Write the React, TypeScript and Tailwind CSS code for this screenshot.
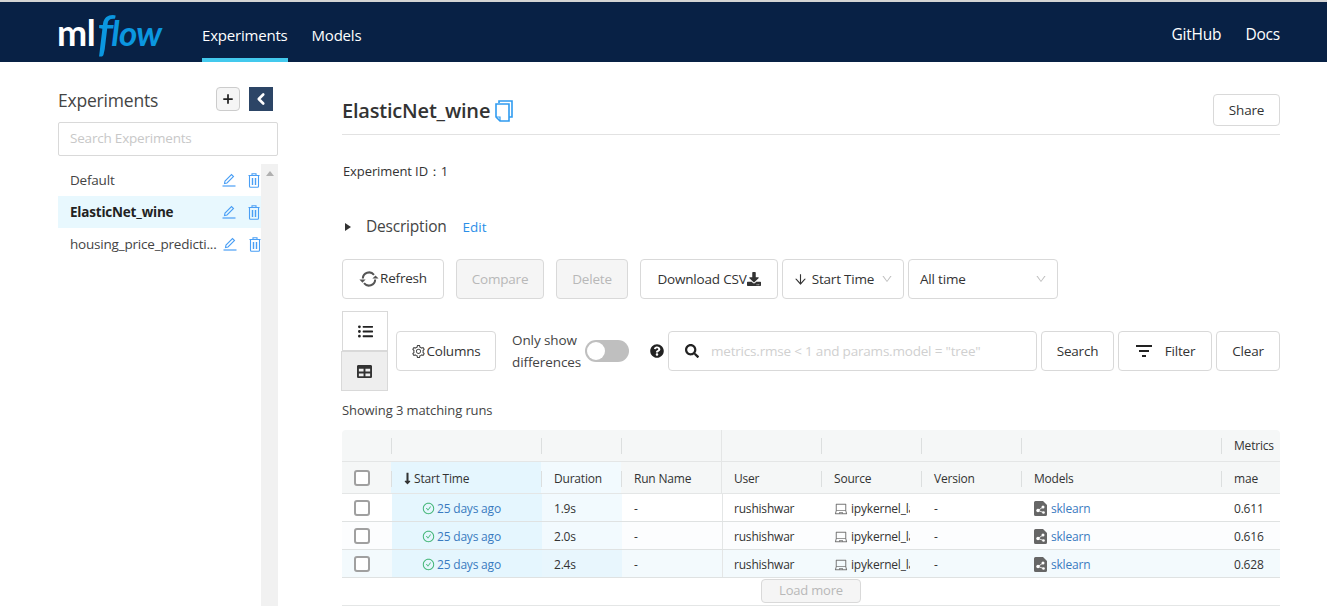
import React from 'react';
import { ChevronLeft, Plus } from 'lucide-react';
import { AiOutlineArrowDown, AiOutlineCheckCircle, AiOutlineDown, AiOutlineLaptop, AiOutlineSetting } from 'react-icons/ai';
import { FaDownload, FaListUl, FaLongArrowAltDown, FaQuestionCircle, FaSearch, FaTable } from 'react-icons/fa';

const font = "font-['Open_Sans','Noto_Sans',sans-serif]";

const experiments = [
  { name: 'Default', active: false, shift: false },
  { name: 'ElasticNet_wine', active: true, shift: false },
  { name: 'housing_price_predicti...', active: false, shift: true }
];

const runs = [
  { duration: '1.9s', mae: '0.611', rowBg: 'bg-white', durBg: 'bg-[#f2fafe]' },
  { duration: '2.0s', mae: '0.616', rowBg: 'bg-[#fcfdfe]', durBg: 'bg-[#f2fafe]' },
  { duration: '2.4s', mae: '0.628', rowBg: 'bg-[#f3fafd]', durBg: 'bg-[#e8f6fd]' }
];

function Btn({ className, children, disabled }: { className: string; children: React.ReactNode; disabled?: boolean }) {
  return (
    <div className={`flex items-center justify-center rounded-[4px] border border-[#d9d9d9] text-[13.5px] tracking-[-0.2px] ${disabled ? 'bg-[#f5f5f5] text-[#b8b8b8]' : 'bg-white text-[#333]'} ${className}`}>
      {children}
    </div>
  );
}

function Box() {
  return <div className="h-[16px] w-[16px] rounded-[3px] border-2 border-[#a0a0a0] bg-white" />;
}

function Sep() {
  return <div className="h-[16px] w-px shrink-0 bg-[#dcdfdf]" />;
}

function EditIcon() {
  return (
    <svg width="14" height="14" viewBox="0 0 14 14" className="shrink-0" fill="none" stroke="#4a9ff5">
      <path d="M2.5 10.5 3 8l6.5-6.5 2 2L5 10z" strokeWidth="1.1" />
      <path d="M0.5 13h13" strokeWidth="1.2" />
    </svg>
  );
}

function TrashIcon() {
  return (
    <svg width="12" height="15" viewBox="0 0 12 15" className="shrink-0" fill="none" stroke="#4a9ff5" strokeWidth="1.1">
      <path d="M0.5 2.5h11M4 2.5V0.7h4v1.8" />
      <path d="M1.5 2.5v10.8a1 1 0 0 0 1 1h7a1 1 0 0 0 1-1V2.5" />
      <path d="M4.5 5v7M7.5 5v7" strokeWidth="1.4" />
    </svg>
  );
}

function CopyIcon() {
  return (
    <svg width="18" height="22" viewBox="0 0 18 22" className="ml-[5px] shrink-0" fill="none" stroke="#2f9bf0" strokeWidth="1.6">
      <path d="M4 3V1h13v16h-3" />
      <path d="M1 4h13v17H5l-4-4z" />
      <path d="M1 17h4v4" strokeWidth="1.2" />
    </svg>
  );
}

function SyncIcon() {
  return (
    <svg width="20" height="18" viewBox="0 0 20 18" className="shrink-0" fill="none" stroke="#555" strokeWidth="2">
      <path d="M3.8 8.5A6.3 6.3 0 0 1 15 4.8" />
      <path d="M16.2 9.5A6.3 6.3 0 0 1 5 13.2" />
      <path d="M0.4 9.6h6.2L3.5 12.8z" fill="#555" stroke="none" />
      <path d="M13.4 8.6h6.2l-3.1-3.2z" fill="#555" stroke="none" />
    </svg>
  );
}

function ModelIcon() {
  return (
    <svg width="13" height="15" viewBox="0 0 13 15" className="mr-[4px] shrink-0">
      <path d="M1.5 0H9l4 4v9.5a1.5 1.5 0 0 1-1.5 1.5h-10A1.5 1.5 0 0 1 0 13.5v-12A1.5 1.5 0 0 1 1.5 0z" fill="#666" />
      <circle cx="4" cy="9.5" r="1.7" fill="#fff" />
      <circle cx="9" cy="6" r="1.5" fill="#fff" />
      <circle cx="9.5" cy="11.5" r="1.3" fill="#fff" />
      <path d="M4 9.5 9 6M4 9.5l5.5 2" stroke="#fff" strokeWidth="0.8" />
    </svg>
  );
}

export default function App() {
  return (
    <div className={`h-[606px] w-[1327px] overflow-hidden bg-white text-[#333] ${font}`}>
      <div className="h-[2px] bg-[#d4d4d4]" />
      <header className="flex h-[60px] items-stretch bg-[#082145] pl-[57px] pr-[47px] text-white">
        <div className="flex w-[145px] items-center leading-none">
          <span className="font-['Lato',sans-serif] text-[36px] font-bold tracking-[-0.5px]">ml</span>
          <span className="ml-[2px] font-['Lato',sans-serif] text-[50px] font-medium italic leading-none text-[#0b97e0]">f</span>
          <span className="-ml-[2px] font-['Lato',sans-serif] text-[35px] font-bold italic tracking-[-0.7px] text-[#0b97e0]">low</span>
        </div>
        <div className="flex h-full flex-col justify-between">
          <div className="flex h-full items-center pt-[10px] text-[15px] tracking-[-0.2px]">Experiments</div>
          <div className="h-[4px] bg-[#43c9ed]" />
        </div>
        <div className="ml-[24px] flex items-center pt-[6px] text-[15px] tracking-[-0.2px]">Models</div>
        <div className="ml-auto flex items-center gap-[24px] pt-[6px] text-[15.5px] tracking-[-0.2px]">
          <span>GitHub</span>
          <span>Docs</span>
        </div>
      </header>

      <div className="flex pl-[58px]">
        <aside className="w-[220px] shrink-0 pt-[25px]">
          <div className="flex h-[24px] items-center">
            <span className="mt-[3px] w-[158px] text-[17.5px] tracking-[-0.2px] text-[#444]">Experiments</span>
            <div className="flex h-[24px] w-[24px] items-center justify-center rounded-[4px] border border-[#ccc] bg-[#f5f5f5]">
              <Plus size={14} strokeWidth={3} className="text-[#222]" />
            </div>
            <div className="ml-[9px] flex h-[24px] w-[24px] items-center justify-center bg-[#2c4566]">
              <ChevronLeft size={18} strokeWidth={3.5} className="text-white" />
            </div>
          </div>
          <div className="mt-[11px] flex h-[34px] items-center rounded-[2px] border border-[#d9d9d9] px-[11px] pb-[2px] text-[13.5px] tracking-[-0.2px] text-[#c8c8c8]">
            Search Experiments
          </div>
          <div className="mt-[8px] flex h-[500px]">
            <div className="w-[203px] shrink-0">
              {experiments.map((exp) => (
                <div key={exp.name} className={`flex h-[32px] items-center pl-[12px] text-[13.5px] tracking-[-0.2px] ${exp.active ? 'bg-[#e8f8fe] font-bold text-[#222]' : 'text-[#444]'}`}>
                  <span className={exp.shift ? 'w-[155px] truncate' : 'w-[152px]'}>{exp.name}</span>
                  <EditIcon />
                  <div className="ml-[12px]"><TrashIcon /></div>
                </div>
              ))}
            </div>
            <div className="flex flex-1 justify-center bg-[#f1f1f1] pt-[7px]">
              <div className="h-0 w-0 border-x-[4px] border-b-[5px] border-x-transparent border-b-[#b0b0b0]" />
            </div>
          </div>
        </aside>

        <main className="ml-[64px] w-[938px] shrink-0">
          <div className="flex h-[73px] items-start justify-between border-b border-[#e2e2e2] pt-[32px]">
            <div className="flex items-center pt-[3px] text-[20px] font-semibold leading-[28px] tracking-[-0.2px] text-[#333]">
              ElasticNet_wine
              <CopyIcon />
            </div>
            <Btn className="h-[32px] w-[67px]">Share</Btn>
          </div>

          <div className="mt-[26px] pl-px text-[13px] leading-[20px] tracking-[-0.1px]">Experiment ID：1</div>

          <div className="mt-[31px] flex h-[30px] items-center">
            <div className="ml-[3px] h-0 w-0 border-y-[4px] border-l-[6px] border-y-transparent border-l-[#333]" />
            <span className="ml-[15px] text-[15.5px] tracking-[-0.2px] text-[#444]">Description</span>
            <span className="ml-[16px] text-[13.5px] text-[#2b8fe8]">Edit</span>
          </div>

          <div className="mt-[17px] flex h-[40px] items-stretch">
            <Btn className="w-[102px] gap-px">
              <SyncIcon />
              <span className="-mt-[1px]">Refresh</span>
            </Btn>
            <Btn disabled className="ml-[12px] w-[88px]">Compare</Btn>
            <Btn disabled className="ml-[12px] w-[72px]">Delete</Btn>
            <Btn className="ml-[12px] w-[138px]">
              Download CSV
              <FaDownload size={14} className="text-[#333]" />
            </Btn>
            <Btn className="ml-[4px] w-[122px]">
              <AiOutlineArrowDown size={15} className="mr-[4px]" />
              Start Time
              <AiOutlineDown size={12} className="ml-[7px] text-[#c0c0c0]" />
            </Btn>
            <Btn className="ml-[4px] w-[150px] !justify-between pl-[11px] pr-[10px]">
              All time
              <AiOutlineDown size={12} className="text-[#c0c0c0]" />
            </Btn>
          </div>

          <div className="mt-[12px] flex items-center">
            <div className="w-[46px] shrink-0">
              <div className="flex h-[40px] items-center justify-center border border-[#d9d9d9] bg-white">
                <FaListUl size={15} className="text-[#222]" />
              </div>
              <div className="-ml-px flex h-[40px] items-center justify-center border border-[#d9d9d9] bg-[#eee]">
                <FaTable size={15} className="text-[#333]" />
              </div>
            </div>
            <Btn className="ml-[8px] h-[40px] w-[100px]">
              <AiOutlineSetting size={15} className="text-[#444]" />
              Columns
            </Btn>
            <div className="ml-[16px] w-[73px] text-[13.5px] leading-[22px] tracking-[-0.1px] text-[#444]">
              Only show differences
            </div>
            <div className="flex h-[22px] w-[44px] items-center rounded-full bg-[#bfbfbf] px-[2px]">
              <div className="h-[18px] w-[18px] rounded-full bg-white" />
            </div>
            <FaQuestionCircle size={14} className="ml-[21px] shrink-0 text-[#222]" />
            <div className="ml-[4px] flex h-[40px] w-[369px] items-center rounded-[4px] border border-[#d9d9d9] pl-[16px]">
              <FaSearch size={14} className="text-[#222]" />
              <span className="ml-[12px] text-[13.5px] tracking-[-0.2px] text-[#d0d0d0]">metrics.rmse &lt; 1 and params.model = "tree"</span>
            </div>
            <Btn className="ml-[4px] h-[40px] w-[73px]">Search</Btn>
            <Btn className="ml-[4px] h-[40px] w-[94px] gap-[12px]">
              <svg width="18" height="12" viewBox="0 0 18 12" className="shrink-0">
                <path d="M1 1h16M4 6h10M7 11h4" stroke="#222" strokeWidth="1.8" />
              </svg>
              Filter
            </Btn>
            <Btn className="ml-[4px] h-[40px] w-[64px]">Clear</Btn>
          </div>

          <div className="mt-[9px] h-[20px] text-[13px] leading-[20px] tracking-[-0.1px] text-[#444]">Showing 3 matching runs</div>

          <div className="mt-[10px] text-[12px] tracking-[-0.2px] text-[#333]">
            <div className="flex h-[32px] items-center rounded-t-[4px] border-b border-[#e4e6e6] bg-[#f5f7f7] font-medium">
              <div className="w-[49px]" />
              <div className="w-[150px]"><Sep /></div>
              <div className="w-[80px]"><Sep /></div>
              <div className="w-[100px]"><Sep /></div>
              <div className="h-full w-[100px] border-l border-[#e4e6e6]" />
              <div className="w-[100px]"><Sep /></div>
              <div className="w-[100px]"><Sep /></div>
              <div className="w-[200px]"><Sep /></div>
              <div className="flex w-[59px] items-center gap-[12px]"><Sep />Metrics</div>
            </div>
            <div className="flex h-[32px] items-center border-b border-[#e4e6e6] bg-[#f5f7f7] font-medium">
              <div className="flex w-[49px] justify-center pr-[9px]"><Box /></div>
              <div className="flex h-full w-[150px] items-center bg-[#e5f6fe] pt-[2px]">
                <Sep />
                <FaLongArrowAltDown size={13} className="ml-[9px] text-[#333]" />
                <span className="ml-[0px]">Start Time</span>
              </div>
              <div className="flex h-full w-[80px] items-center gap-[12px] bg-[#f2fafe] pt-[2px]"><Sep />Duration</div>
              <div className="flex w-[100px] items-center gap-[12px] pt-[2px]"><Sep />Run Name</div>
              <div className="flex h-full w-[100px] items-center border-l border-[#e4e6e6] pl-[12px] pt-[2px]">User</div>
              <div className="flex w-[100px] items-center gap-[12px] pt-[2px]"><Sep />Source</div>
              <div className="flex w-[100px] items-center gap-[12px] pt-[2px]"><Sep />Version</div>
              <div className="flex w-[200px] items-center gap-[12px] pt-[2px]"><Sep />Models</div>
              <div className="flex w-[59px] items-center gap-[12px] pt-[2px]"><Sep />mae</div>
            </div>
            {runs.map((run) => (
              <div key={run.mae} className={`flex h-[28px] items-center border-b border-[#dfe2e2] ${run.rowBg}`}>
                <div className="flex w-[50px] justify-center pr-[10px]"><Box /></div>
                <div className="flex h-full w-[150px] items-center bg-[#e5f6fe] pl-[30px] pt-[2px] text-[#3a7bc0]">
                  <AiOutlineCheckCircle size={13} className="mr-[2px] text-[#3cb371]" />
                  25 days ago
                </div>
                <div className={`flex h-full w-[80px] items-center pl-[12px] pt-[2px] ${run.durBg}`}>{run.duration}</div>
                <div className="w-[100px] pl-[12px] pt-[2px]">-</div>
                <div className="flex h-full w-[100px] items-center border-l border-[#e4e6e6] pl-[11px] pt-[2px]">rushishwar</div>
                <div className="flex w-[100px] items-center pl-[12px] pt-[2px]">
                  <AiOutlineLaptop size={14} className="mr-[3px] shrink-0 text-[#777]" />
                  <span className="w-[59px] overflow-hidden whitespace-nowrap">ipykernel_la</span>
                </div>
                <div className="w-[100px] pl-[12px] pt-[2px]">-</div>
                <div className="flex w-[200px] items-center pl-[12px] pt-[2px]">
                  <ModelIcon />
                  <span className="text-[#3a7bc0]">sklearn</span>
                </div>
                <div className="w-[58px] pl-[12px] pt-[2px]">{run.mae}</div>
              </div>
            ))}
            <div className="flex h-[28px] items-start justify-center border-b border-[#e4e6e6] pt-px">
              <Btn disabled className="h-[24px] w-[100px] !text-[13px]">Load more</Btn>
            </div>
          </div>
        </main>
      </div>
    </div>
  );
}
